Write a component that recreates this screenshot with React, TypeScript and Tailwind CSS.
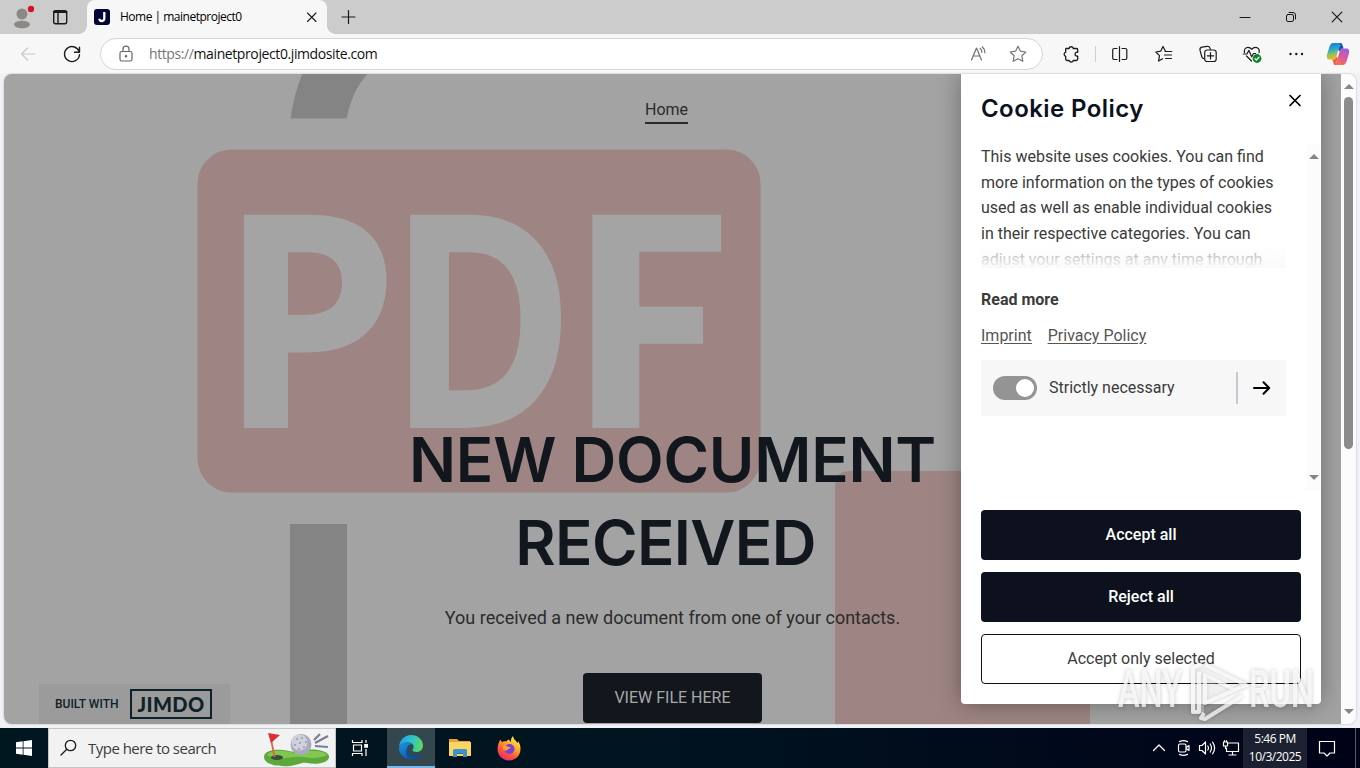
import React from 'react';

type IconProps = {
  className?: string;
  size?: number;
  width?: number;
  children: React.ReactNode;
};

// Thin line icon, 1 unit = 1px at the default size
const Icon = ({ className = '', size = 20, width = 1, children }: IconProps) => (
  <svg
    className={`shrink-0 ${className}`}
    width={size}
    height={size}
    viewBox={`0 0 ${size} ${size}`}
    fill="none"
    stroke="currentColor"
    strokeWidth={width}
    strokeLinecap="round"
    strokeLinejoin="round"
  >
    {children}
  </svg>
);

const TabBar = () => (
  <div className="flex h-[34px] shrink-0 bg-[#cccccc] text-[#1a1a1a]">
    <div className="flex w-[44px] items-center justify-center">
      <svg width="24" height="26" viewBox="0 0 24 26">
        <circle cx="12" cy="10" r="5.5" fill="#8c8885" />
        <ellipse cx="12" cy="20.5" rx="8" ry="3.8" fill="#8c8885" />
        <circle cx="21" cy="5" r="3.2" fill="#d5102b" />
      </svg>
    </div>
    <div className="flex w-[43px] items-center pl-[6px]">
      <Icon width={1.4}>
        <rect x="3.7" y="3.7" width="13" height="13" rx="2" />
        <path d="M4 5.4h12.4M8 6v10.5" />
        <path d="M4 4.8h12.4" strokeWidth="2" />
      </Icon>
    </div>
    <div className="relative flex w-[240px] items-center rounded-t-lg bg-[#f7f7f7] pr-[8px] pl-[7px]">
      <span className="absolute bottom-0 -left-2 size-2 bg-[radial-gradient(circle_at_0_0,#cccccc_7.5px,#f7f7f7_8px)]" />
      <span className="absolute -right-2 bottom-0 size-2 bg-[radial-gradient(circle_at_100%_0,#cccccc_7.5px,#f7f7f7_8px)]" />
      <svg width="16" height="16" viewBox="0 0 16 16">
        <rect width="16" height="16" rx="3" fill="#03053a" />
        <path d="M10.3 3v6.4a2.4 2.4 0 0 1-4.9.3" fill="none" stroke="#fff" strokeWidth="2.3" />
      </svg>
      <span className="ml-[10px] flex-1 text-[12px] tracking-[-0.5px] whitespace-nowrap text-black">Home | mainetproject0</span>
      <Icon size={14} width={1.1}>
        <path d="M2.5 3l8.5 8.5M11 3l-8.5 8.5" />
      </Icon>
    </div>
    <div className="ml-[13px] flex items-center">
      <Icon size={16} width={1.2}>
        <path d="M8.5 1.500v13M2 8h13" />
      </Icon>
    </div>
    <div className="ml-auto flex">
      <div className="flex w-[46px] items-center justify-center">
        <Icon size={12}>
          <path d="M1 6.5h10" />
        </Icon>
      </div>
      <div className="flex w-[46px] items-center justify-center">
        <Icon size={12}>
          <rect x="1.5" y="3.5" width="7" height="7" rx="1.5" />
          <path d="M4 1.5h4a2.5 2.5 0 0 1 2.5 2.5v4" />
        </Icon>
      </div>
      <div className="flex w-[46px] items-center justify-center">
        <Icon size={12} width={1.2}>
          <path d="M1.2 1.2l9.6 9.6M10.8 1.2l-9.6 9.6" />
        </Icon>
      </div>
    </div>
  </div>
);

const Copilot = () => (
  <svg className="mr-[2px]" width="24" height="24" viewBox="0 0 24 24">
    <defs>
      <linearGradient id="cpA" x1="0" y1="0" x2="0.2" y2="1">
        <stop offset="0" stopColor="#1a6fd0" />
        <stop offset="0.4" stopColor="#22a5d8" />
        <stop offset="0.7" stopColor="#7fc465" />
        <stop offset="1" stopColor="#f3b51e" />
      </linearGradient>
      <linearGradient id="cpB" x1="0.8" y1="0" x2="0.2" y2="1">
        <stop offset="0" stopColor="#9a5fe0" />
        <stop offset="0.5" stopColor="#e0579c" />
        <stop offset="1" stopColor="#f5793c" />
      </linearGradient>
    </defs>
    <path d="M16.500 2.500c-.5-1-1.200-1.500-2.400-1.500H7.500C5.200 1 4.200 2.500 3.400 5L1.200 12C.2 15.500 1 17.500 4 17.500h3.700c1.400 0 2.100-.9 2.500-2.300L12.800 6c.5-1.500 1-2 2.200-2z" fill="url(#cpA)" />
    <path d="M7.500 21.500c.5 1 1.200 1.500 2.400 1.500h6.600c2.300 0 3.300-1.500 4.100-4l2.200-7c1-3.500.2-5.500-2.800-5.500h-3.700c-1.400 0-2.100.9-2.500 2.300l-2.600 9.200c-.5 1.500-1 2-2.200 2z" fill="url(#cpB)" />
    <path d="M13.500 1c2.200 0 2.800 1.300 3.400 3.300l.7 2.200h-1.200c-1.300 0-1.900.8-2.300 2.100l-.2.600-1.700-1.200.7-2.300C13.400 4.400 13.800 4 15 4z" fill="#1450b8" />
    <path d="M10.500 23c-2.200 0-2.800-1.300-3.400-3.300l-.7-2.200h1.200c1.300 0 1.900-.8 2.300-2.100l.2-.600 1.700 1.200-.7 2.300c-.5 1.300-.9 1.700-2.100 1.700z" fill="#ed5a3c" />
  </svg>
);

const Toolbar = () => (
  <div className="flex h-[39px] shrink-0 items-center bg-[#f7f7f7] text-[#1b1b1b]">
    <div className="flex w-[56px] justify-center">
      <Icon className="text-[#c9c9c9]" width={1.2}>
        <path d="M17 10H3.5M9.5 4L3.5 10l6 6" />
      </Icon>
    </div>
    <div className="flex w-[32px] justify-center">
      <Icon width={1.4}>
        <path d="M17.3 8.2A7.5 7.5 0 1 0 17.5 10.8M17.5 3.3v5h-5" />
      </Icon>
    </div>
    <div className="ml-[12px] flex h-[32px] w-[943px] items-center rounded-full border border-[#d6d6d6] bg-white">
      <Icon className="ml-[15px] text-[#666666]" width={1.2}>
        <rect x="4" y="7.5" width="12" height="9.5" rx="1.8" />
        <path d="M7 7.3V5.2a3 3 0 0 1 6 0v2.1" />
        <circle cx="10" cy="12.3" r="0.7" fill="currentColor" />
      </Icon>
      <span className="ml-[13px] flex-1 text-[14px] tracking-[-0.4px] text-[#111111]">
        <span className="text-[#767676]">https://</span>mainetproject0.jimdosite.com
      </span>
      <Icon className="mr-[20px] text-[#6e6e6e]" width={1.2}>
        <path d="M3.5 16L8.5 4l5 12M5.2 12h6.6M12 4.3c1.3 1 1.9 2.4 1.9 4M14.2 2.8c1.8 1.500 2.700 3.600 2.700 6" />
      </Icon>
      <Icon className="mr-[14px] text-[#767676]" width={1.2}>
        <path d="M10 2.2l2.4 5 5.4.8-3.9 3.8.9 5.5-4.800-2.600-4.800 2.600.9-5.500L2.200 8l5.400-.8z" />
      </Icon>
    </div>
    <div className="ml-[6px] flex w-[44px] justify-center">
      <Icon width={1.3}>
        <path d="M5 4.5h3a2.2 2.2 0 0 1 4.3 0h3.2a1.2 1.2 0 0 1 1.2 1.2v2.600a2 2 0 1 0 0 3.800v3a1.400 1.400 0 0 1-1.400 1.400h-3a2.200 2.200 0 0 1-4.200 0H6.200a1.500 1.500 0 0 1-1.500-1.500v-2.600a2.200 2.200 0 0 1 0-4.200V5" />
      </Icon>
    </div>
    <div className="ml-[2px] h-[16px] w-px bg-[#cfcfcf]" />
    <div className="ml-[2px] flex w-[44px] justify-center">
      <Icon width={1.2}>
        <path d="M7 4.500H4.200A1.500 1.500 0 0 0 2.700 6v8a1.500 1.500 0 0 0 1.500 1.500H7M12 4.500h3.300A1.500 1.500 0 0 1 16.800 6v8a1.500 1.500 0 0 1-1.500 1.500H12M9.500 2.500v15" />
      </Icon>
    </div>
    <div className="flex w-[44px] justify-center">
      <Icon width={1.2}>
        <path d="M11.5 7.3L9 2.5 6.7 7.2 1.8 8l3.700 3.600-.9 5.500 4-2.300M11 7.500h6.800M10.500 11h7M11.500 14.500h6" />
      </Icon>
    </div>
    <div className="flex w-[44px] justify-center">
      <Icon width={1.2}>
        <path d="M6 14.600a2.800 2.800 0 0 1-2.300-2.100L2 6.200a2.600 2.600 0 0 1 1.900-3L9 2.300a2.700 2.700 0 0 1 3 1.900l.3 1.100" />
        <rect x="6.7" y="6" width="11.5" height="11.5" rx="2.5" />
        <path d="M12.5 8.600v6.400M9.300 11.800h6.400" />
      </Icon>
    </div>
    <div className="flex w-[44px] justify-center">
      <Icon width={1.2}>
        <path d="M2.500 8.500C1.800 5.500 3.500 3.300 6 3.300c1.800 0 3 1 3.700 2 .8-1.100 2-2 3.800-2 2.700 0 4.400 2.400 3.600 5.400M4.500 12l5 5M1.300 10h3.600l2-3.600 2.800 6.400 1.900-3.300h2" />
        <circle cx="15" cy="14.500" r="4.400" fill="#12832c" stroke="none" />
        <path d="M13 14.600l1.400 1.400 2.600-2.800" stroke="#fff" />
      </Icon>
    </div>
    <div className="flex w-[44px] justify-center">
      <Icon>
        <g fill="currentColor" stroke="none">
          <circle cx="4.5" cy="10" r="1.2" />
          <circle cx="10.300" cy="10" r="1.2" />
          <circle cx="16" cy="10" r="1.2" />
        </g>
      </Icon>
    </div>
    <div className="flex w-[42px] justify-center">
      <Copilot />
    </div>
  </div>
);

// Enlarged file icon behind the hero text
const HeroBackdrop = () => (
  <svg className="absolute inset-0" width="1337" height="651" viewBox="4 74 1337 651">
    <path d="M290.5 118.500Q294 94 303 72h66q-17 18-22.500 46.500z" fill="#848484" />
    <rect x="290" y="524" width="57" height="210" fill="#848484" />
    <rect x="197.5" y="149.5" width="563" height="343" rx="34" fill="#9e8583" />
    <path d="M835 740V486q0-15 15-15h240v269z" fill="#9e8583" />
    <g fill="#a3a4a3" fontFamily="'Noto Sans', sans-serif" fontWeight="700" fontSize="298.5">
      <text transform="translate(219.500 428) scale(.966 1)">P</text>
      <text transform="translate(388.500 428) scale(.853 1)">D</text>
      <text transform="translate(564 428) scale(1.055 1)">F</text>
    </g>
    <rect x="703" y="296" width="14" height="54" fill="#9e8583" />
  </svg>
);

const HeroContent = () => (
  <div className="relative flex w-[1337px] flex-col items-center text-[#2b2b2b]">
    <div className="mt-[23px] mr-[12px] h-[27px] border-b-2 border-[#2b2b2b] text-[16px] leading-[25px]">Home</div>
    <h1 className="mt-[294px] flex flex-col items-center font-[Inter,sans-serif] text-[62px] leading-[83px] font-semibold text-[#11171d]">
      <span className="tracking-[-0.25px]">NEW DOCUMENT</span>
      <span className="mr-[14px] tracking-[-0.65px]">RECEIVED</span>
    </h1>
    <p className="mt-[20px] text-[18px] leading-[28px]">You received a new document from one of your contacts.</p>
    <button className="mt-[41px] h-[50px] w-[179px] rounded-[4px] bg-[#11171d] text-[16px] text-[#a8a8a8]">
      VIEW FILE HERE
    </button>
  </div>
);

const JimdoBadge = () => (
  <div className="absolute bottom-0 left-[35px] flex h-[40px] w-[191px] items-center bg-[#9b9b9b] pl-[16px] text-[#0d2229]">
    <span className="w-[75px] text-[12px] font-medium">BUILT WITH</span>
    <span className="flex h-[30px] w-[82px] items-center justify-center border-2 border-[#0d2229] font-[Lato,sans-serif] text-[20px] leading-none font-black tracking-[0.4px]">
      JIMDO
    </span>
  </div>
);

const CookieDialog = () => (
  <div className="absolute top-0 left-[957px] flex h-[630px] w-[360px] flex-col rounded-b-[4px] bg-white px-[20px] pb-[20px] text-[16px] text-[#3b3b3b] shadow-[0_0_24px_rgba(0,0,0,0.35)]">
    <div className="flex h-[70px] shrink-0 items-start justify-between">
      <h2 className="mt-[19px] font-[Inter,sans-serif] text-[24px] leading-[32px] font-semibold tracking-[0.42px] text-[#0c111d]">
        Cookie Policy
      </h2>
      <Icon className="mt-[19px] -mr-[1px] text-black" size={14} width={1.7}>
        <path d="M2 2.500l10 10M12 2.500L2 12.500" />
      </Icon>
    </div>
    <div className="-mr-[20px] flex h-[346px] shrink-0">
      <div className="w-[305px]">
        <p className="relative h-[124px] overflow-hidden leading-[25.7px]">
          This website uses cookies. You can find more information on the types of cookies used as well as enable
          individual cookies in their respective categories. You can adjust your settings at any time through
          <span className="absolute inset-x-0 bottom-0 h-[26px] bg-linear-to-b from-white/40 to-[#fafafa]" />
        </p>
        <div className="mt-[19px] leading-[26px] font-bold">Read more</div>
        <div className="mt-[10px] flex gap-4 leading-[26px] text-[#555555] underline underline-offset-2">
          <a>Imprint</a>
          <a>Privacy Policy</a>
        </div>
        <div className="mt-[11px] flex h-[56px] items-center bg-[#f7f7f7] pl-[12px]">
          <span className="flex h-[24px] w-[44px] items-center justify-end rounded-full bg-[#949494] pr-[3px]">
            <span className="size-[18px] rounded-full bg-white" />
          </span>
          <span className="ml-[12px] flex-1">Strictly necessary</span>
          <span className="h-[32px] w-[2px] bg-[#c6c8cf]" />
          <Icon className="mr-[14px] ml-[14px] text-black" width={2}>
            <path d="M2 10h15M11.5 4.300L17.200 10l-5.700 5.700" />
          </Icon>
        </div>
      </div>
      <div className="ml-auto flex w-[15px] flex-col items-center justify-between bg-[#fcfcfc] pt-[9px] pb-[9px]">
        <svg width="10" height="6"><path d="M0 6L5 1l5 5z" fill="#858585" /></svg>
        <svg width="10" height="6"><path d="M0 0l5 5 5-5z" fill="#858585" /></svg>
      </div>
    </div>
    <div className="mt-[20px] flex flex-col gap-[12px] font-medium">
      <button className="h-[50px] rounded-[4px] bg-[#0c111d] text-white">Accept all</button>
      <button className="h-[50px] rounded-[4px] bg-[#0c111d] text-white">Reject all</button>
      <button className="h-[50px] rounded-[4px] border border-[#0c111d] bg-white font-normal">Accept only selected</button>
    </div>
  </div>
);

const PageScrollbar = () => (
  <div className="flex w-[15px] flex-col items-center bg-[#fcfcfc]">
    <svg className="mt-[9px]" width="10" height="6"><path d="M0 6L5 1l5 5z" fill="#858585" /></svg>
    <span className="mt-[8px] h-[352px] w-[9px] rounded-full bg-[#8b8b8b]" />
    <svg className="mt-auto mb-[9px]" width="10" height="6"><path d="M0 0l5 5 5-5z" fill="#858585" /></svg>
  </div>
);

const Watermark = () => (
  <svg
    className="absolute top-[654px] left-[1110px] drop-shadow-[0_0_2px_rgba(0,0,0,0.3)]"
    width="210"
    height="72"
    viewBox="0 0 210 72"
    fill="#ffffff"
    fillOpacity="0.75"
  >
    <g fontFamily="Roboto, sans-serif" fontSize="52" fontWeight="500">
      <text x="8" y="53" textLength="64" lengthAdjust="spacingAndGlyphs">ANY</text>
      <text x="139" y="53" textLength="65" lengthAdjust="spacingAndGlyphs">RUN</text>
    </g>
    <path d="M81 15l13-5v13l26 14-26 13v9H81z" fillOpacity="0.3" />
    <g fill="none" stroke="#ffffff" strokeOpacity="0.75" strokeWidth="4" strokeLinejoin="round">
      <path d="M92 10l-9 4v44h6V18" />
      <path d="M95 11l41 20-41 18V21l28 14" />
      <path d="M94 59l-3 5 4 1 37-23" />
    </g>
  </svg>
);

const GolfArt = () => (
  <svg width="68" height="38" viewBox="0 0 68 38">
    <path d="M1 28c0-6 9-8 19-7 8 1 12 3 18 1 10-3 27-1 28 5 1 7-12 9-22 7-6-1-8 2-17 3C13 38 1 35 1 28z" fill="#5da83b" />
    <path d="M4 26c2-4 10-5 17-4 8 1 12 3 18 1 9-2 24-1 25 3-9 4-17 3-25 2-9-2-23 5-35-2z" fill="#83c753" />
    <ellipse cx="14" cy="28.5" rx="6" ry="2.5" fill="#3d4c3c" />
    <path d="M7 5l4.500 23" stroke="#d8664e" strokeWidth="1.8" />
    <path d="M5 4l12 2-9 8z" fill="#e02e35" />
    <circle cx="38" cy="15.5" r="10.5" fill="#aaa9bd" />
    <circle cx="36.5" cy="13.5" r="8" fill="#d0cfdc" />
    <g fill="#9e9db4">
      <circle cx="34" cy="10" r="1.1" />
      <circle cx="39" cy="9" r="1.1" />
      <circle cx="43" cy="13" r="1.1" />
      <circle cx="37" cy="14" r="1.1" />
      <circle cx="32" cy="16" r="1.1" />
      <circle cx="41" cy="18" r="1.1" />
      <circle cx="36" cy="20" r="1.1" />
    </g>
    <path d="M51 11l6-6M52 14l13-7M52 17l13 1" stroke="#7d7c99" strokeWidth="2.2" />
  </svg>
);

const EdgeLogo = () => (
  <svg width="26" height="26" viewBox="0 0 26 26">
    <defs>
      <linearGradient id="edA" x1="0" y1="0.3" x2="1" y2="0.5">
        <stop offset="0" stopColor="#1ba1e2" />
        <stop offset="0.5" stopColor="#2cc3d2" />
        <stop offset="1" stopColor="#5fd85a" />
      </linearGradient>
      <linearGradient id="edB" x1="0" y1="0" x2="0.6" y2="1">
        <stop offset="0" stopColor="#1b94e0" />
        <stop offset="1" stopColor="#0b5cb5" />
      </linearGradient>
    </defs>
    <path d="M1 13C1.500 6 6.500 1 13 1c7 0 12 5 12 10.500 0 4-3 6.500-6.500 6.500-2.500 0-4-1-4-2 0-.7 1.200-1.300 1.200-3 0-2.500-2.300-4.500-5.700-4.500C5.500 8.500 2 10 1 13z" fill="url(#edA)" />
    <path d="M1 13.500C2 10 5.500 8.400 9.500 8.400c2.300 0 4 .8 5 2-3-1-5.500 1.600-5.500 5 0 5 4.500 8.600 9.500 7.800-1.800 1.200-3.600 1.800-5.500 1.800C6 25 .8 20 1 13.500z" fill="url(#edB)" />
    <path d="M9.200 14c-.5 5 3.800 8.500 8.300 8.200 2.500-.2 4-.8 5.500-1.700.5-.3 1 .1.700.6-2 3-5.200 4-8.200 4C9.500 25 6 20 9.200 14z" fill="#0c4f9f" />
  </svg>
);

const ExplorerLogo = () => (
  <svg width="24" height="20" viewBox="0 0 24 20">
    <path d="M1 1h8l2 2h11v4H1z" fill="#e8a42c" />
    <path d="M1 4h22v14H1z" fill="#fbd665" />
    <path d="M5 19v-6.500q0-1.500 1.500-1.500h11q1.500 0 1.500 1.500V19h-4v-3.500H9V19z" fill="#3f93cd" />
    <path d="M9 15.500h6" stroke="#266fa5" />
  </svg>
);

const FirefoxLogo = () => (
  <svg width="24" height="25" viewBox="0 0 24 25">
    <defs>
      <linearGradient id="ffA" x1="0.8" y1="0" x2="0.2" y2="1">
        <stop offset="0" stopColor="#fff04f" />
        <stop offset="0.35" stopColor="#ffb02e" />
        <stop offset="0.65" stopColor="#ff5a36" />
        <stop offset="1" stopColor="#e5227a" />
      </linearGradient>
    </defs>
    <path d="M3.500 3.500c.3 1.200.8 2 1.500 2.600C6.500 5 8 5 9.500 5.500 10 4.500 11 3.800 12 3.500c.5 1.200 1.300 2 2 2.500-.3-2.300.5-4.600 2-6 .5 3.500 3 4.500 4.500 7 .4-.6.5-1.300.4-2C23 7.500 23.500 10 23.500 13c0 6.500-5 11.500-11.500 11.500S.5 19.500.5 13C.5 9 1.700 6 3.500 3.500z" fill="url(#ffA)" />
    <circle cx="12.5" cy="13" r="5" fill="#7443dc" />
    <path d="M5 10c2.500-1.500 4-.5 5.500.5 1.200.7 2.500.5 3.300.8-.8 1.700-2.600 1.700-3.500 2.800C9 15.500 7.500 14 6.500 14z" fill="#ff9b30" />
  </svg>
);

const Taskbar = () => (
  <div className="flex h-[40px] shrink-0 bg-linear-to-r from-[#001720] via-[#001320] to-[#000317] text-white">
    <div className="flex w-[48px] items-center justify-center">
      <svg width="16" height="16" viewBox="0 0 16 16" fill="#fff">
        <path d="M0 2.200l6.700-.9v6.300H0zM7.500 1.200L16 0v7.600H7.500zM0 8.400h6.700v6.300L0 13.800zM7.500 8.400H16V16l-8.500-1.200z" />
      </svg>
    </div>
    <div className="flex w-[288px] items-center border border-[#c5c5c5] bg-[#f2f2f2] pr-[4px] pl-[10px]">
      <Icon className="text-[#1b1b1b]" width={1.3}>
        <circle cx="11.5" cy="7.5" r="5.2" />
        <path d="M7.800 11.200L2 17" />
      </Icon>
      <span className="ml-[9px] flex-1 text-[15px] tracking-[-0.52px] text-[#3c3c3c]">Type here to search</span>
      <GolfArt />
    </div>
    <div className="flex w-[51px] items-center pl-[15px]">
      <svg width="20" height="18" viewBox="0 0 20 18" fill="none" stroke="#fff" strokeWidth="1.2">
        <path d="M1.500 1v2.500h9.500V1M1.500 17v-2.500h9.500V17M2.500 6h8v6h-8zM15 1v3M15 10v7" />
        <path d="M13.800 5.500h2.600v2.600h-2.600z" fill="#fff" />
      </svg>
    </div>
    <div className="flex w-[48px] items-center justify-center border-b-2 border-[#76b9ed] bg-[#34474f]">
      <EdgeLogo />
    </div>
    <div className="flex w-[49px] items-center justify-center">
      <ExplorerLogo />
    </div>
    <div className="flex w-[49px] items-center justify-center">
      <FirefoxLogo />
    </div>
    <div className="ml-auto flex items-center">
      <Icon size={14} width={1.3} className="mr-[9px]">
        <path d="M1.500 9.500L7 4l5.500 5.500" />
      </Icon>
      <Icon size={18} width={1.2} className="mr-[5px]">
        <rect x="3.5" y="5" width="7.500" height="8" rx="1.500" />
        <path d="M11.500 8.200l2.500-1.700v5l-2.500-1.700M4.500 2.600q4-1.800 8 0M4.500 15.400q4 1.800 8 0" />
      </Icon>
      <Icon size={18} width={1.2} className="mr-[6px]">
        <path d="M1.500 6.500h2.500L7.500 3v12L4 11.500H1.500zM9.800 7q1.300 2 0 4M12.200 5q2.600 4 0 8M14.600 3.200q4 5.800 0 11.600" />
      </Icon>
      <Icon size={18} width={1.2} className="mr-[3px]">
        <path d="M6.500 4h10v8.500h-12V9M10.500 12.500V16M7 16h7" />
        <path d="M1.500 3h4v4h-4zM3.500 7v2.500M2.500 1.500v1.500M4.500 1.500v1.500" />
      </Icon>
      <div className="flex h-[40px] w-[64px] flex-col items-center justify-center bg-[#1c2131] text-[12px] leading-[18px] tracking-[-0.5px]">
        <span>5:46 PM</span>
        <span>10/3/2025</span>
      </div>
      <div className="flex w-[48px] items-center pl-[11px]">
        <Icon size={18} width={1.2}>
          <path d="M1.500 2.500h15V14h-4.500l-3 3-3-3H1.500z" />
        </Icon>
      </div>
      <div className="h-[40px] w-[5px] border-l border-[#555b66]" />
    </div>
  </div>
);

const App = () => {
  return (
    <div className="relative flex h-[768px] w-[1360px] flex-col overflow-hidden bg-[#f0f2f6] font-['Open_Sans','Noto_Sans',sans-serif]">
      <TabBar />
      <Toolbar />

      {/* Web page */}
      <div className="mx-[4px] mt-px flex h-[650px] overflow-hidden rounded-[8px] font-[Roboto,sans-serif] shadow-[0_0_2px_rgba(0,0,0,0.3)]">
        <div className="relative w-[1337px] overflow-hidden bg-[#a3a3a3]">
          <HeroBackdrop />
          <HeroContent />
          <JimdoBadge />
          <CookieDialog />
        </div>
        <PageScrollbar />
      </div>

      <div className="mt-auto">
        <Taskbar />
      </div>
      <Watermark />
    </div>
  );
};

export default App;
